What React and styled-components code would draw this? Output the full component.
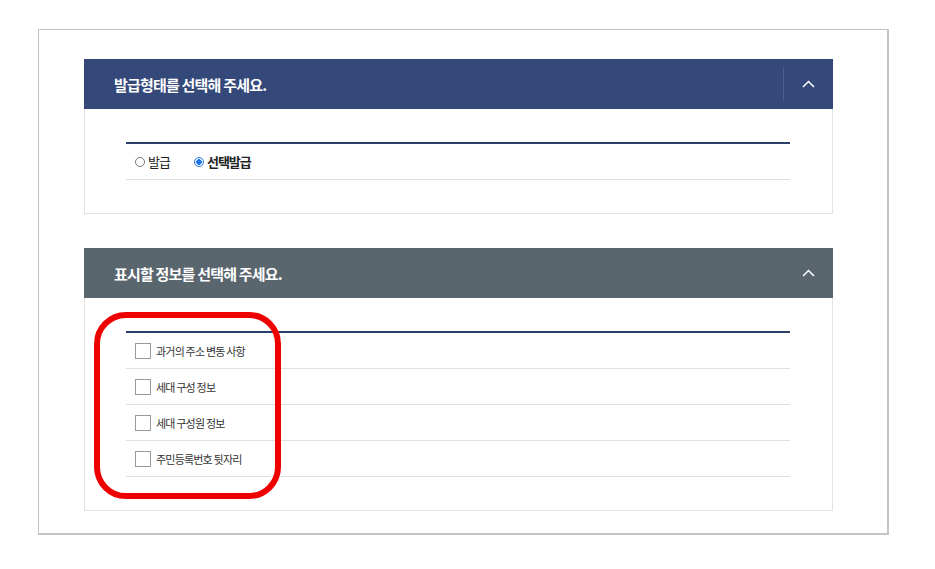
import React from "react"
import styled, { createGlobalStyle } from "styled-components"

const GlobalStyle = createGlobalStyle`
  body {
    margin: 0;
    background: #ffffff;
    font-family: "Noto Sans CJK KR", "Noto Sans", sans-serif;
  }
`

const Frame = styled.div`
  position: relative;
  box-sizing: border-box;
  width: 851px;
  height: 506px;
  margin: 29px 0 0 38px;
  border: 1px solid #c4c4c4;
  border-right-width: 2px;
  border-bottom-width: 2px;
  padding: 29px 54px 0 45px;
  display: flex;
  flex-direction: column;
  gap: 34px;
`

const Panel = styled.section`
  box-sizing: border-box;
  border: 1px solid #e2e2e2;
  border-top: none;
`

const Header = styled.div`
  height: 50px;
  margin: 0 -1px;
  background: ${(p) => p.$bg};
  display: flex;
  align-items: center;
  padding-left: 30px;
  color: #ffffff;
`

const Title = styled.h2`
  flex: 1;
  margin: 0;
  font-size: 15px;
  font-weight: 700;
  letter-spacing: -0.8px;
`

const Toggle = styled.button`
  width: 50px;
  height: 32px;
  border: none;
  border-left: 1px solid ${(p) => (p.$divider ? "rgba(255,255,255,0.12)" : "transparent")};
  background: transparent;
  display: flex;
  align-items: center;
  justify-content: center;
  padding: 0;
`

const Body = styled.div`
  padding: 33px 42px 33px 41px;
`

const List = styled.ul`
  list-style: none;
  margin: 0;
  padding: 0;
  border-top: 2px solid #2c3f66;
`

const Row = styled.li`
  height: 35px;
  border-bottom: 1px solid #e0e0e0;
  display: flex;
  align-items: center;
  padding-left: 9px;
  gap: ${(p) => p.$gap || 0}px;
`

const RadioLabel = styled.label`
  display: flex;
  align-items: center;
  gap: 3px;
  font-size: 13px;
  letter-spacing: -1px;
  color: #222;
  font-weight: ${(p) => (p.$on ? 700 : 400)};
`

const RadioDot = styled.span`
  box-sizing: border-box;
  width: 10px;
  height: 10px;
  border-radius: 50%;
  border: 1px solid ${(p) => (p.$on ? "#1a73e8" : "#777")};
  background: ${(p) => (p.$on ? "radial-gradient(circle, #1a73e8 0 2.6px, #fff 3px)" : "#fff")};
`

const CheckLabel = styled.label`
  display: flex;
  align-items: center;
  gap: 5px;
  font-size: 11px;
  letter-spacing: -0.8px;
  color: #333;
`

const Box = styled.span`
  box-sizing: border-box;
  width: 16px;
  height: 16px;
  border: 1px solid #9a9a9a;
  background: #fff;
`

const Highlight = styled.div`
  position: absolute;
  left: 55px;
  top: 282px;
  width: 187px;
  height: 187px;
  box-sizing: border-box;
  border: 6px solid #ee0000;
  border-radius: 32px;
  pointer-events: none;
`

const Chevron = () => (
  <svg width="13" height="8" viewBox="0 0 13 8">
    <path d="M1 7 L6.5 1.5 L12 7" fill="none" stroke="#ffffff" strokeWidth="1.5" />
  </svg>
)

const options = ["과거의 주소 변동 사항", "세대 구성 정보", "세대 구성원 정보", "주민등록번호 뒷자리"]

export default function App() {
  return (
    <>
      <GlobalStyle />
      <Frame>
        <Panel>
          <Header $bg="#34497a">
            <Title>발급형태를 선택해 주세요.</Title>
            <Toggle $divider>
              <Chevron />
            </Toggle>
          </Header>
          <Body>
            <List>
              <Row $gap={24}>
                <RadioLabel>
                  <RadioDot />
                  발급
                </RadioLabel>
                <RadioLabel $on>
                  <RadioDot $on />
                  선택발급
                </RadioLabel>
              </Row>
            </List>
          </Body>
        </Panel>
        <Panel>
          <Header $bg="#5a666e">
            <Title>표시할 정보를 선택해 주세요.</Title>
            <Toggle>
              <Chevron />
            </Toggle>
          </Header>
          <Body>
            <List>
              {options.map((o) => (
                <Row key={o}>
                  <CheckLabel>
                    <Box />
                    {o}
                  </CheckLabel>
                </Row>
              ))}
            </List>
          </Body>
        </Panel>
        <Highlight />
      </Frame>
    </>
  )
}
